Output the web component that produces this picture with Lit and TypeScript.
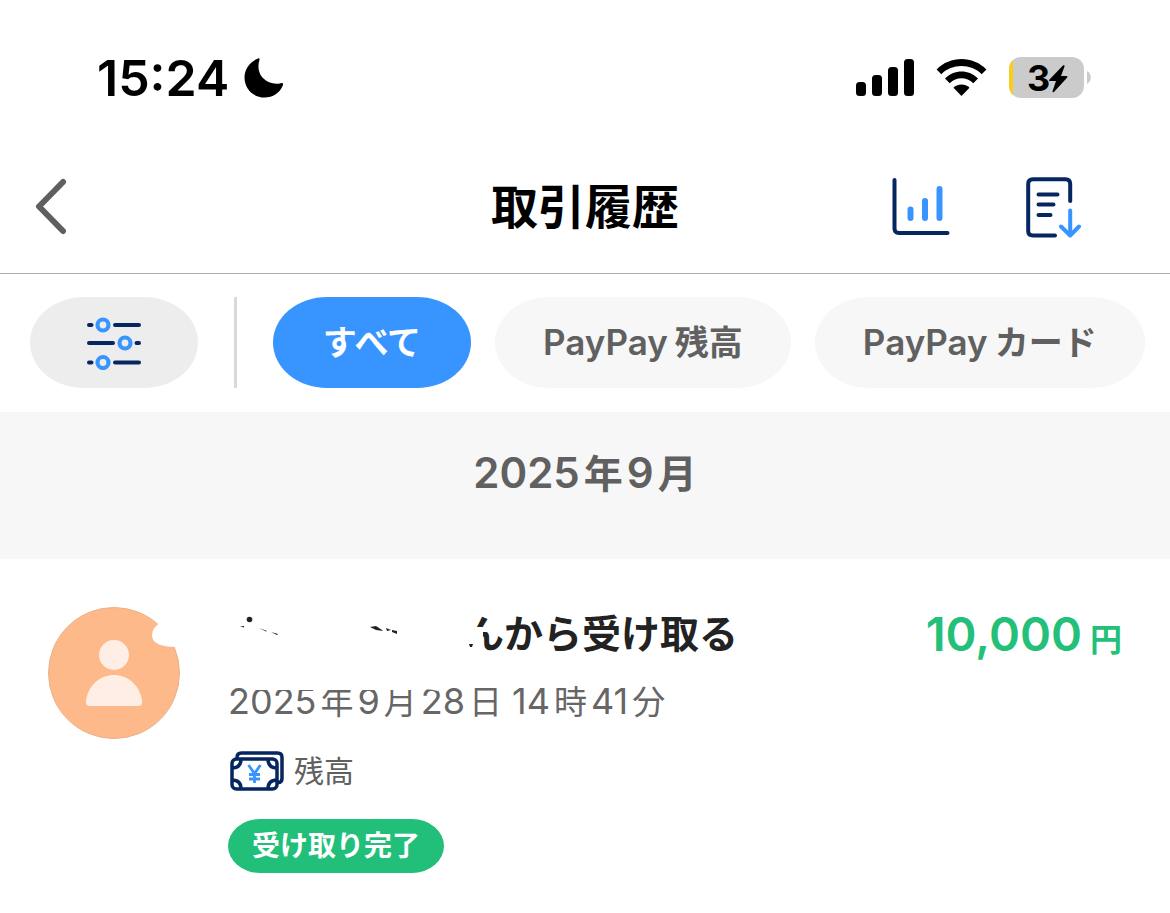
import { LitElement, html, css } from "lit";
import { customElement, property, state } from "lit/decorators.js";
import { classMap } from "lit/directives/class-map.js";

const NAVY = "#06265f";
const BLUE = "#3895ff";

// Splits mixed text so Latin runs and Japanese runs can be sized separately.
const mixed = (text: string) =>
  text
    .split(/([0-9A-Za-z:,]+)/)
    .filter((part) => part !== "")
    .map((part) =>
      /^[0-9A-Za-z]/.test(part) ? html`<span class="latin">${part}</span>` : part
    );

@customElement("status-bar")
export class StatusBar extends LitElement {
  static styles = css`
    :host {
      display: flex;
      align-items: center;
      justify-content: space-between;
      box-sizing: border-box;
      height: 140px;
      padding: 16px 79px 0 97px;
      color: #000;
    }
    .group {
      display: flex;
      align-items: center;
    }
    .left {
      gap: 15px;
    }
    .right {
      gap: 22px;
    }
    .time {
      font-size: 50px;
      line-height: 60px;
      font-weight: 600;
    }
    svg {
      display: block;
    }
    .level {
      font-family: Inter, sans-serif;
      font-size: 36px;
      font-weight: 700;
    }
  `;

  render() {
    return html`
      <div class="group left">
        <span class="time">15:24</span>
        <svg width="40" height="40" viewBox="0 0 40 40" aria-label="おやすみモード">
          <path
            d="M13.500 .800C15-.2 16 .6 15.400 2.200c-1.700 5-1.400 12.200 3 17.300 5 5.300 12.200 7.300 18.400 5.700 1.800-.5 2.700.5 2 2.200C36 34.500 28.800 39.500 20.500 39.500 9.300 39.500.5 30.800.5 19.500.5 11.500 5.500 3.800 13.500.8z"
          />
        </svg>
      </div>
      <div class="group right">
        <svg width="58" height="38" viewBox="0 0 58 38" aria-label="電波">
          <rect x="0" y="23" width="10" height="14" rx="3.500" />
          <rect x="16" y="16" width="10" height="21" rx="3.500" />
          <rect x="32" y="8" width="10" height="29" rx="3.500" />
          <rect x="48" y="0" width="10" height="37" rx="3.500" />
        </svg>
        <svg width="51" height="38" viewBox="0 0 51 38" aria-label="Wi-Fi">
          <path
            d="M.6 10.500C14-3.500 37-3.500 50.400 10.500L45.700 15.200C35 4.300 16 4.300 5.300 15.200z"
          />
          <path d="M9 19.500C18 10 33 10 42 19.500L37.300 24.200C30.500 17.500 20.500 17.500 13.700 24.200z" />
          <path d="M17.500 28.700C22 24.300 29 24.300 33.500 28.700L25.500 37z" />
        </svg>
        <svg width="82" height="49" viewBox="0 -3 82 49" aria-label="バッテリー">
          <defs>
            <clipPath id="cell"><rect width="75" height="41" rx="12" /></clipPath>
          </defs>
          <g clip-path="url(#cell)">
            <rect width="75" height="41" fill="#cbcbcb" />
            <rect width="4" height="41" fill="#f8ce1c" />
          </g>
          <path d="M78 14c5 2.500 5 10.500 0 13z" fill="#cbcbcb" />
          <text class="level" x="18" y="34">3</text>
          <path
            d="M54 8.500L40.500 22.500c-.8.9-.4 1.600.6 1.600H47l-3.400 9.800c-.4 1.300.7 1.700 1.600.8L58 20.800c.8-.9.5-1.700-.6-1.700H52l3.500-9.600c.4-1.200-.6-1.800-1.500-1z"
          />
        </svg>
      </div>
    `;
  }
}

@customElement("nav-bar")
export class NavBar extends LitElement {
  static styles = css`
    :host {
      display: grid;
      grid-template-columns: 1fr auto 1fr;
      align-items: center;
      box-sizing: border-box;
      height: 134px;
      padding: 0 88px 0 34px;
      border-bottom: 1px solid #adadad;
    }
    h1 {
      margin: 0 0 0 54px;
      font-size: 47px;
      line-height: 60px;
      font-weight: 700;
      color: #000;
    }
    .actions {
      display: flex;
      justify-content: flex-end;
      gap: 76px;
    }
    button {
      padding: 0;
      border: 0;
      background: none;
      justify-self: start;
    }
    svg {
      display: block;
      fill: none;
      stroke-linecap: round;
      stroke-linejoin: round;
    }
  `;

  render() {
    return html`
      <button aria-label="戻る">
        <svg width="34" height="58" viewBox="0 0 34 58" stroke="#5f5f5f" stroke-width="6">
          <path d="M29 4L5 28.500 29 53" />
        </svg>
      </button>
      <h1>取引履歴</h1>
      <div class="actions">
        <button aria-label="集計">
          <svg width="58" height="60" viewBox="0 0 58 60">
            <path d="M2.500 3V51.500Q2.500 56 7 56H55.500" stroke=${NAVY} stroke-width="4" />
            <path d="M18.500 32.500V41M33 24V41M47.500 12V41" stroke=${BLUE} stroke-width="6" />
          </svg>
        </button>
        <button aria-label="明細をダウンロード">
          <svg width="56" height="62" viewBox="0 0 56 62">
            <path
              d="M29 59.500H7Q2.200 59.500 2.200 55V8Q2.200 3.200 7 3.200H39.500Q44.200 3.200 44.200 8V25"
              stroke=${NAVY}
              stroke-width="4"
            />
            <path d="M12.500 18.500H31.500M12.500 28.500H27.500M12.500 39H24.500" stroke=${NAVY} stroke-width="4" />
            <path d="M44.200 34.500V58.500M35 50.500L44.200 59.500 53 50.500" stroke=${BLUE} stroke-width="4" />
          </svg>
        </button>
      </div>
    `;
  }
}

@customElement("filter-bar")
export class FilterBar extends LitElement {
  @state() private selected = "すべて";
  private options = ["すべて", "PayPay残高", "PayPayカード"];

  static styles = css`
    :host {
      display: flex;
      align-items: stretch;
      box-sizing: border-box;
      height: 138px;
      padding: 23px 0 24px 30px;
      overflow: hidden;
    }
    button {
      flex: none;
      padding: 0 48px;
      border: 0;
      border-radius: 54px / 50%;
      font: inherit;
      font-size: 34px;
      font-weight: 600;
      white-space: nowrap;
    }
    .settings {
      display: grid;
      place-items: center;
      width: 168px;
      background: #ededed;
    }
    .divider {
      flex: none;
      width: 3px;
      margin: 0 36px;
      background: #d9d9d9;
    }
    .chips {
      display: flex;
      gap: 24px;
    }
    .chip {
      min-width: 198px;
      padding-bottom: 4px;
      background: #f7f7f7;
      color: #606060;
    }
    .on {
      background: #3895ff;
      color: #fff;
    }
    .latin {
      margin-right: 7px;
      font-size: 35px;
    }
  `;

  render() {
    return html`
      <button class="settings" aria-label="絞り込み">
        <svg width="54" height="54" viewBox="0 0 54 54" fill="none" stroke-linecap="round">
          <path
            d="M2 9H4.500M28 9H52M2 27H26M49.500 27H52M2 46.500H4.500M28 46.500H52"
            stroke=${NAVY}
            stroke-width="4"
          />
          <g stroke=${BLUE} stroke-width="4.200">
            <circle cx="16" cy="9" r="5.500" />
            <circle cx="38" cy="27" r="5.500" />
            <circle cx="16" cy="46.500" r="5.500" />
          </g>
        </svg>
      </button>
      <span class="divider"></span>
      <div class="chips">
        ${this.options.map(
          (name) => html`<button
            class=${classMap({ chip: true, on: name === this.selected })}
            aria-pressed=${name === this.selected}
            @click=${() => (this.selected = name)}
          >${mixed(name)}</button>`
        )}
      </div>
    `;
  }
}

@customElement("history-item")
export class HistoryItem extends LitElement {
  @property() name = "";
  @property() date = "";
  @property() time = "";
  @property() amount = "";
  @property() source = "";
  @property() status = "";

  static styles = css`
    :host {
      display: flex;
      align-items: flex-start;
      padding: 48px;
    }
    svg {
      display: block;
      flex: none;
    }
    .body {
      position: relative;
      flex: 1;
      margin-left: 48px;
    }
    .top {
      display: flex;
      align-items: flex-start;
      justify-content: space-between;
      height: 56px;
    }
    h3 {
      margin: 0;
      padding-left: 237px;
      font-size: 39px;
      line-height: 54px;
      font-weight: 600;
      color: #222;
    }
    .amount {
      font-size: 47px;
      line-height: 54px;
      font-weight: 600;
      color: #24bf79;
      white-space: nowrap;
    }
    .unit {
      margin-left: 8px;
      font-size: 32px;
    }
    .date {
      display: flex;
      gap: 10px;
      margin-top: 16px;
      font-size: 33px;
      line-height: 44px;
      color: #666;
    }
    .date .latin {
      margin: 0 4px;
      font-size: 36px;
    }
    .date .latin:first-child {
      margin-left: 0;
    }
    .source {
      display: flex;
      align-items: center;
      gap: 9px;
      margin: 27px 0 0 2px;
      font-size: 30px;
      line-height: 40px;
      color: #606060;
    }
    .status {
      display: block;
      width: fit-content;
      margin-top: 28px;
      padding: 0 24px;
      border-radius: 32px / 50%;
      background: #22bf7a;
      color: #fff;
      font-size: 28px;
      line-height: 54px;
      font-weight: 600;
    }
    .smudge {
      position: absolute;
      top: 0;
      left: 0;
    }
  `;

  render() {
    return html`
      <svg width="132" height="132" viewBox="0 0 132 132" role="img" aria-label="送り主">
        <circle cx="66" cy="66" r="65.500" fill="#feb98a" stroke="#eab189" />
        <circle cx="66" cy="48" r="15" fill="#ffeee5" />
        <path d="M42 99Q37 99 38 93C41 77 53 68 66 68S91 77 94 93Q95 99 90 99z" fill="#ffeee5" />
        <path d="M114 15Q104 20 104 28C104 37 114 40 130 40L134 20z" fill="#fff" />
      </svg>
      <div class="body">
        <div class="top">
          <h3>${this.name}</h3>
          <span class="amount">${this.amount}<span class="unit">円</span></span>
        </div>
        <time class="date"><span>${mixed(this.date)}</span><span>${mixed(this.time)}</span></time>
        <div class="source">
          <svg width="55" height="40" viewBox="0 0 55 40" fill="none" stroke=${NAVY} stroke-width="3.500">
            <path d="M7 8V6.500Q7 2 11.500 2H47.500Q52 2 52 6.500V27.500Q52 31.500 48 31.500" />
            <rect x="2" y="8" width="45" height="30" rx="4.500" />
            <path d="M11 8Q11 17 2 17M38 8Q38 17 47 17M2 29Q11 29 11 38M47 29Q38 29 38 38" />
            <path d="M18.500 14L24.500 22.500 30.500 14M24.500 22V32M19 23.500H30M19 28H30" stroke=${BLUE} stroke-width="2.800" />
          </svg>
          ${this.source}
        </div>
        <span class="status">${this.status}</span>
        <svg class="smudge" width="290" height="90" viewBox="0 0 290 90" aria-hidden="true">
          <path d="M230 20H253L265 20V25H255V48H230z" fill="#fff" />
          <path d="M28 70H210V84Q200 81 190 83H28z" fill="#fff" />
          <g fill="#222">
            <circle cx="21.500" cy="12.500" r="2.800" />
            <path d="M12 19.500l4-.5v1.500zM31 21l8 3-1 .5zM43 25l7 2-1 1z" />
            <path d="M142 20l6-1 6 4 1 1-7-1zM158 21l5 2-4 1zM164 23l5 1v3l-5-2z" />
            <path d="M241 37h4l-1 3h-2z" />
          </g>
        </svg>
      </div>
    `;
  }
}

@customElement("app-root")
export class AppRoot extends LitElement {
  static styles = css`
    :host {
      display: block;
      min-height: 100vh;
      background: #fff;
      font-family: Inter, "Noto Sans CJK JP", sans-serif;
    }
    h2 {
      box-sizing: border-box;
      height: 147px;
      margin: 0;
      padding-top: 31px;
      background: #f7f7f7;
      color: #606060;
      font-size: 39px;
      line-height: 60px;
      font-weight: 600;
      text-align: center;
    }
    h2 .latin {
      margin: 0 4px;
      font-size: 42px;
    }
    h2 .latin:first-child {
      margin-left: 0;
    }
  `;

  render() {
    return html`
      <status-bar></status-bar>
      <nav-bar></nav-bar>
      <filter-bar></filter-bar>
      <h2>${mixed("2025年9月")}</h2>
      <history-item
        name="んから受け取る"
        date="2025年9月28日"
        time="14時41分"
        amount="10,000"
        source="残高"
        status="受け取り完了"
      ></history-item>
    `;
  }
}
